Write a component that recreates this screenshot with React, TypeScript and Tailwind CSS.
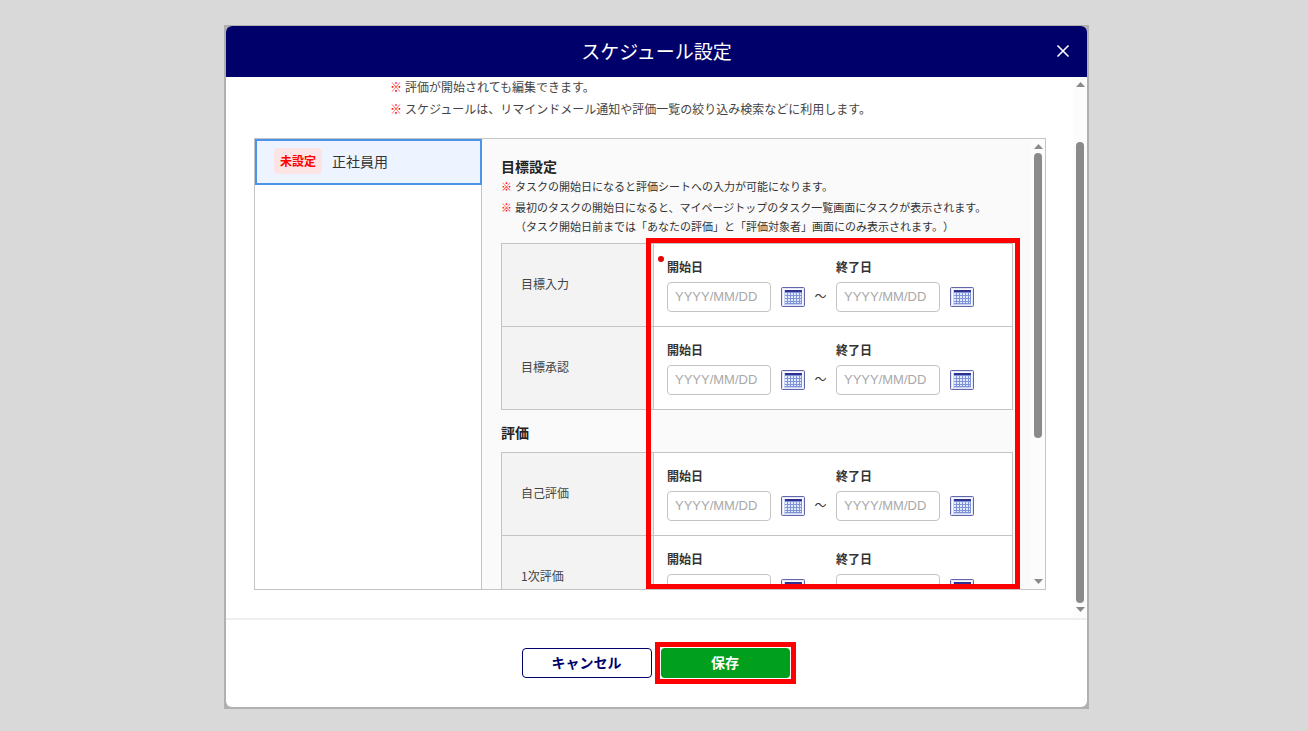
import { X } from "lucide-react";

const planSections = [
  { title: "目標設定", rows: ["目標入力", "目標承認"] },
  { title: "評価", rows: ["自己評価", "1次評価"] },
];

function CalendarIcon() {
  return (
    <svg width="24" height="20" viewBox="0 0 24 20" aria-hidden="true">
      <rect x="0.5" y="0.5" width="23" height="19" rx="1" fill="#e4e7f5" stroke="#6466ac" />
      <rect x="2" y="2" width="20" height="16" fill="#fbfcff" />
      <rect x="3" y="3" width="18" height="15" fill="#c9d2f0" />
      <rect x="4" y="3" width="17" height="2" fill="#2f3190" />
      <rect x="4" y="5" width="17" height="12" fill="#7e93d8" />
      {[4, 7, 10, 13, 16, 19].map((x) =>
        [6, 9, 12, 15].map((y) => (
          <rect key={`${x}-${y}`} x={x} y={y} width={x === 19 ? 1 : 2} height={y === 15 ? 1 : 2} fill="#e3eafb" />
        ))
      )}
    </svg>
  );
}

function DateField({ id, label }: { id: string; label: string }) {
  return (
    <div className="flex items-end gap-2.5">
      <div className="flex flex-col gap-[7px]">
        <label htmlFor={id} className="text-xs leading-4 font-bold text-[#333]">
          {label}
        </label>
        <input
          id={id}
          type="text"
          placeholder="YYYY/MM/DD"
          className="h-[30px] w-[104px] rounded border border-[#c4c4c4] bg-white px-[7px] pb-0.5 font-['Liberation_Sans',Arial,sans-serif] text-[13px] placeholder:text-[#a9a9a9]"
        />
      </div>
      <button type="button" aria-label={`${label}を選択`} className="mb-[5px]">
        <CalendarIcon />
      </button>
    </div>
  );
}

function TaskRow({ name, required }: { name: string; required: boolean }) {
  return (
    <tr>
      <th
        scope="row"
        className="w-[152px] border border-[#c4c4c4] bg-[#f3f3f3] pb-0.5 pl-[19px] text-left text-xs font-normal text-[#444]"
      >
        {name}
      </th>
      <td className="relative border border-[#c4c4c4] bg-white pt-[15px] pb-3.5 pl-[13px]">
        {required && <span className="absolute top-3 left-1 size-1.5 rounded-full bg-[#e60000]" />}
        <div className="flex items-end">
          <DateField id={`${name}-start`} label="開始日" />
          <span className="w-[31px] text-center text-xs leading-8">～</span>
          <DateField id={`${name}-end`} label="終了日" />
        </div>
      </td>
    </tr>
  );
}

function TaskTable({ rows, required = false }: { rows: string[]; required?: boolean }) {
  return (
    <table className="w-full border-collapse">
      <tbody>
        {rows.map((name, i) => (
          <TaskRow key={name} name={name} required={required && i === 0} />
        ))}
      </tbody>
    </table>
  );
}

function Note({ children }: { children: string }) {
  return (
    <p className="flex gap-[3px]">
      <span className="font-bold text-[#ff0000]">※</span>
      <span>{children}</span>
    </p>
  );
}

function Arrow({ down = false }: { down?: boolean }) {
  return (
    <svg width="9" height="5" viewBox="0 0 9 5" className="shrink-0" aria-hidden="true">
      <path d={down ? "M0 0h9L4.5 5z" : "M0 5h9L4.5 0z"} fill="#8a8a8a" />
    </svg>
  );
}

export default function App() {
  return (
    <div className="flex h-screen flex-col bg-[#d9d9d9] pt-[25px] pr-[219px] pb-[22px] pl-[224px] font-['Noto_Sans_CJK_JP','Noto_Sans',sans-serif] text-[#333] [text-spacing-trim:space-all]">
      <div className="flex min-h-0 flex-1 flex-col bg-[#b0b0b0] px-0.5 pt-px pb-0.5">
        <div
          role="dialog"
          aria-labelledby="schedule-title"
          className="flex min-h-0 flex-1 flex-col overflow-hidden rounded-md bg-white"
        >
          <header className="relative flex h-[51px] shrink-0 items-center justify-center bg-[#00006a] text-white">
            <h1 id="schedule-title" className="text-[19px]">
              スケジュール設定
            </h1>
            <button type="button" aria-label="閉じる" className="absolute right-3.5 pb-0.5">
              <X size={20} strokeWidth={2} />
            </button>
          </header>

          <div className="flex min-h-0 flex-1">
            <main className="flex min-w-0 flex-1 flex-col pr-[27px] pb-7 pl-7">
              <div className="pl-[136px] text-xs leading-5 text-[#444]">
                <Note>評価が開始されても編集できます。</Note>
                <div className="mt-0.5">
                  <Note>スケジュールは、リマインドメール通知や評価一覧の絞り込み検索などに利用します。</Note>
                </div>
              </div>

              <div className="relative mt-[19px] flex min-h-0 flex-1 border border-[#c4c4c4]">
                <nav className="w-[227px] shrink-0 border-r border-[#c4c4c4]">
                  <button
                    type="button"
                    className="flex h-[46px] w-[227px] items-center gap-2.5 border-2 border-[#4c93ea] bg-[#edf4ff] pb-0.5 pl-[17px] text-sm"
                  >
                    <span className="rounded bg-[#fde4e4] px-1.5 py-[5px] text-xs leading-4 font-bold text-[#ff0000]">
                      未設定
                    </span>
                    正社員用
                  </button>
                </nav>

                <div className="min-w-0 flex-1 overflow-hidden bg-[#fafafa] pt-[17px] pr-[18px] pl-[19px]">
                  <h2 className="text-sm leading-5 font-bold text-[#222]">{planSections[0].title}</h2>
                  <div className="text-[11px] leading-[21px]">
                    <Note>タスクの開始日になると評価シートへの入力が可能になります。</Note>
                    <Note>最初のタスクの開始日になると、マイページトップのタスク一覧画面にタスクが表示されます。</Note>
                    <p className="pl-3.5 leading-4">
                      （タスク開始日前までは「あなたの評価」と「評価対象者」画面にのみ表示されます。）
                    </p>
                  </div>
                  <div className="mt-[9px]">
                    <TaskTable rows={planSections[0].rows} required />
                  </div>

                  <h2 className="mt-3 mb-2.5 text-sm leading-5 font-bold text-[#222]">
                    {planSections[1].title}
                  </h2>
                  <TaskTable rows={planSections[1].rows} />
                </div>

                <div className="flex w-3.5 shrink-0 flex-col items-center bg-[#fcfcfc] py-[5px]">
                  <Arrow />
                  <div className="mt-1 h-[285px] w-2 rounded-full bg-[#8a8a8a]" />
                  <div className="flex-1" />
                  <Arrow down />
                </div>

                <div className="pointer-events-none absolute right-[25px] bottom-0 h-[351px] w-[374px] border-5 border-[#ff0000]" />
              </div>
            </main>

            <div className="flex w-3.5 shrink-0 flex-col items-center bg-[#fcfcfc] pt-[5px] pb-1.5">
              <Arrow />
              <div className="mt-[55px] mb-1 w-2 flex-1 rounded-full bg-[#8a8a8a]" />
              <Arrow down />
            </div>
          </div>

          <footer className="flex shrink-0 justify-center gap-[9px] border-t-2 border-[#eeeeee] pt-7 pr-0.5 pb-[29px] text-sm font-bold">
            <button
              type="button"
              className="h-[30px] w-[130px] rounded border border-[#00006a] bg-white pb-0.5 text-[#00006a]"
            >
              キャンセル
            </button>
            <div className="relative">
              <button type="button" className="h-[30px] w-[129px] rounded bg-[#00a01e] pb-0.5 text-white">
                保存
              </button>
              <div className="pointer-events-none absolute -inset-1.5 border-5 border-[#ff0000]" />
            </div>
          </footer>
        </div>
      </div>
    </div>
  );
}
